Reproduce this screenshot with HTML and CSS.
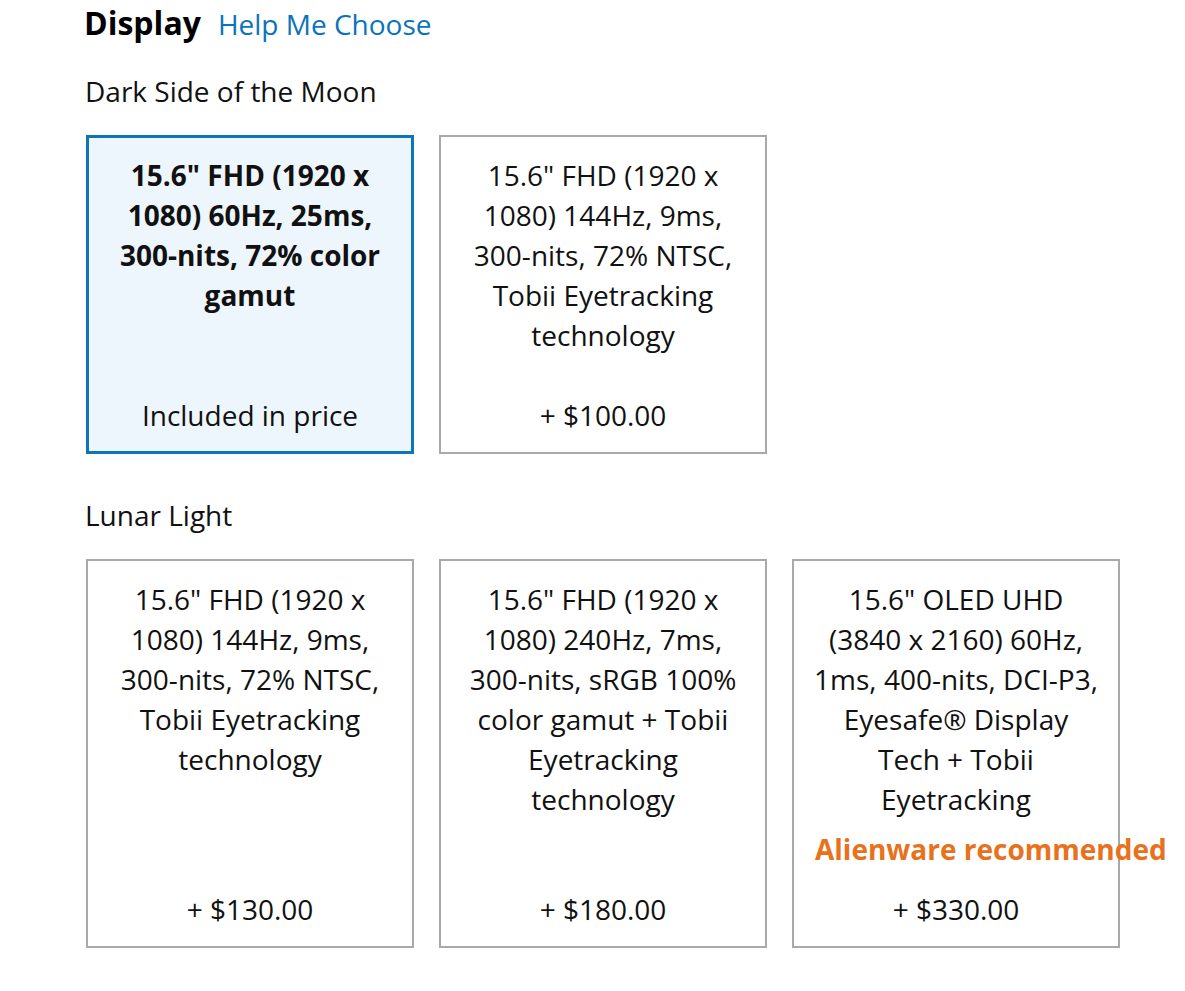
FILE: index.html
```html
<!DOCTYPE html>
<html lang="en">
<head>
    <meta charset="UTF-8">
    <meta name="viewport" content="width=device-width, initial-scale=1.0">
    <title>Display</title>
    <link rel="stylesheet" href="styles.css">
</head>
<body>
    <div class="container">
        <div class="section-title">
            <h2>Display</h2>
            <a href="#" class="help-link">Help Me Choose</a>
        </div>

        <h3 class="group-title">Dark Side of the Moon</h3>
        <div class="options">
            <div class="option selected">
                <div class="option-desc">15.6" FHD (1920 x 1080) 60Hz, 25ms, 300-nits, 72% color gamut</div>
                <div class="option-price">Included in price</div>
            </div>
            <div class="option">
                <div class="option-desc">15.6" FHD (1920 x 1080) 144Hz, 9ms, 300-nits, 72% NTSC, Tobii Eyetracking technology</div>
                <div class="option-price">+ $100.00</div>
            </div>
        </div>

        <h3 class="group-title lunar">Lunar Light</h3>
        <div class="options">
            <div class="option">
                <div class="option-desc">15.6" FHD (1920 x 1080) 144Hz, 9ms, 300-nits, 72% NTSC, Tobii Eyetracking technology</div>
                <div class="option-price">+ $130.00</div>
            </div>
            <div class="option">
                <div class="option-desc">15.6" FHD (1920 x 1080) 240Hz, 7ms, 300-nits, sRGB 100% color gamut + Tobii Eyetracking technology</div>
                <div class="option-price">+ $180.00</div>
            </div>
            <div class="option">
                <div class="option-desc">15.6" OLED UHD (3840 x 2160) 60Hz, 1ms, 400-nits, DCI-P3, Eyesafe® Display Tech + Tobii Eyetracking</div>
                <div class="option-note">Alienware recommended</div>
                <div class="option-price">+ $330.00</div>
            </div>
        </div>
    </div>
</body>
</html>
```

FILE: styles.css
```css
* {
    box-sizing: border-box;
    margin: 0;
    padding: 0;
}

body {
    background-color: #fff;
    color: #111;
    font-family: "Open Sans", "Noto Sans", Arial, sans-serif;
    font-size: 28px;
    line-height: 40px;
}

.container {
    padding: 3px 0 40px 86px;
}

.section-title {
    display: flex;
    align-items: baseline;
    gap: 17px;
}

.section-title h2 {
    font-size: 32px;
    font-weight: 700;
    color: #000;
    margin-left: -2px;
}

.help-link {
    font-size: 28px;
    color: #0b73bd;
    text-decoration: none;
}

.group-title {
    font-size: 28px;
    font-weight: 400;
    margin: 27px 0 24px -1px;
}

.group-title.lunar {
    margin-top: 41px;
}

.options {
    display: grid;
    grid-template-columns: repeat(3, 328px);
    column-gap: 25px;
}

.option {
    display: flex;
    flex-direction: column;
    border: 2px solid #a9a9a9;
    padding: 18px 18px 17px;
    text-align: center;
    cursor: pointer;
}

.option.selected {
    border: 3px solid #0e76b4;
    background-color: #eef6fd;
    padding: 17px 17px 16px;
}

.option.selected .option-desc {
    font-weight: 700;
}

.option-note {
    margin-top: 10px;
    padding-left: 3px;
    color: #e8711c;
    font-weight: 700;
    white-space: nowrap;
}

.option-price {
    margin-top: auto;
    padding-top: 40px;
}

.option-note + .option-price {
    padding-top: 20px;
}
```
